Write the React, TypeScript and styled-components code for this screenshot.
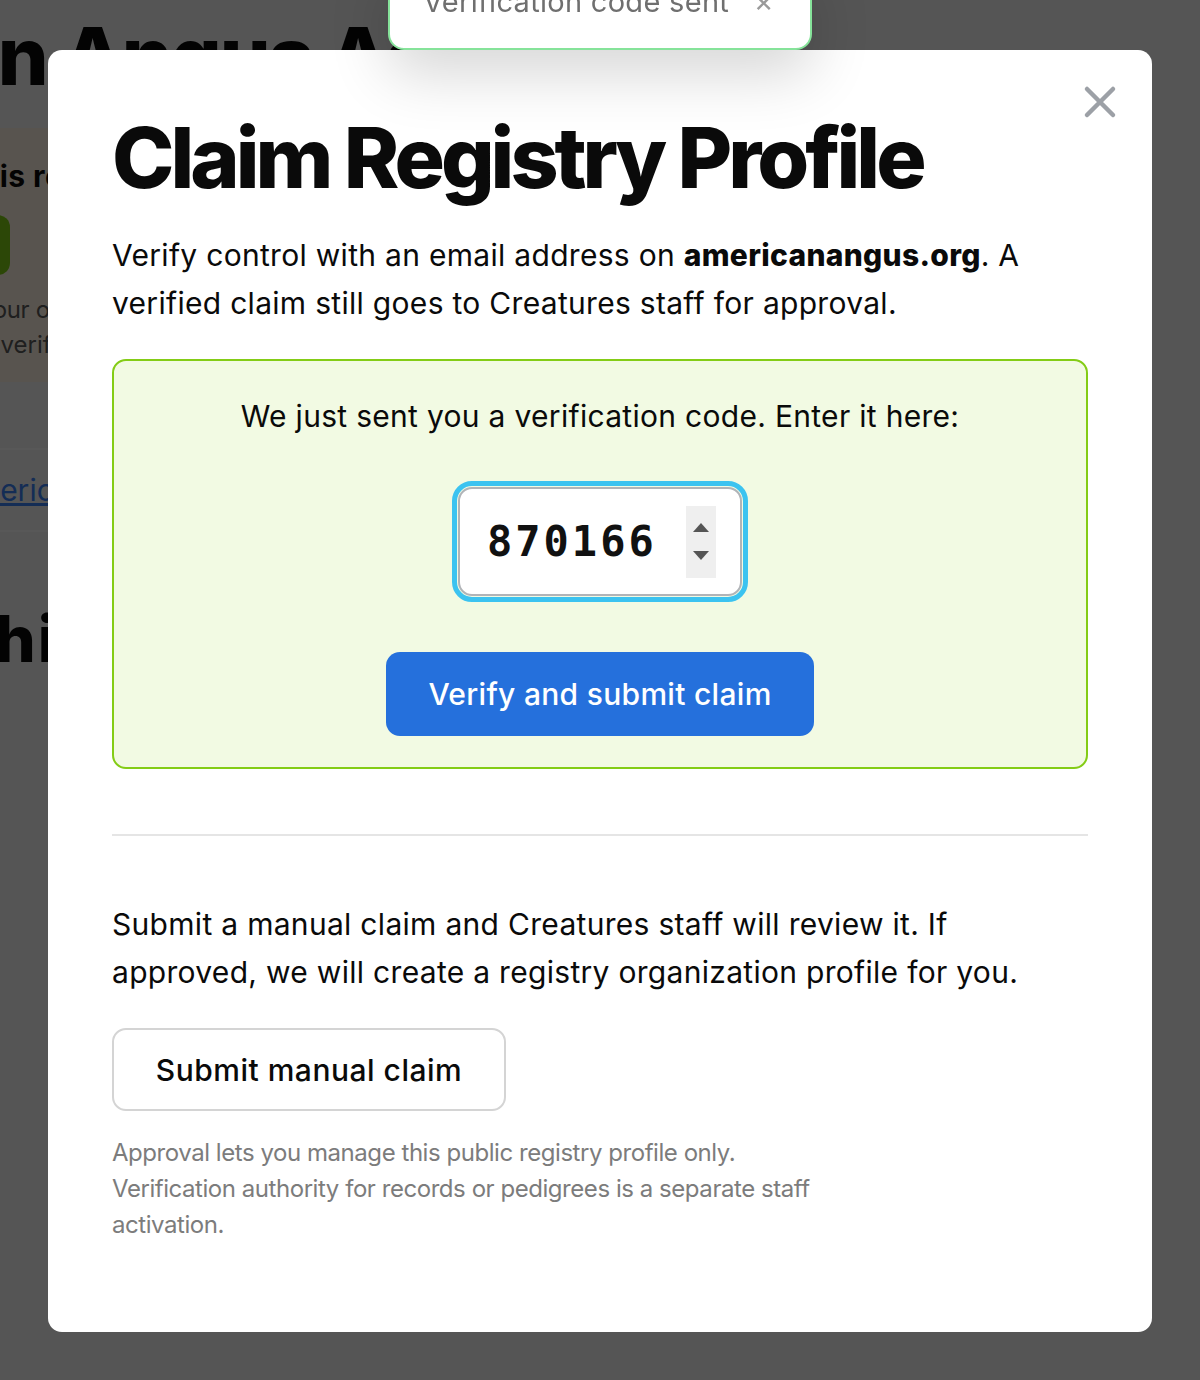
import React, { useState } from "react";
import styled, { createGlobalStyle } from "styled-components";

const GlobalStyle = createGlobalStyle`
  html, body {
    margin: 0;
    padding: 0;
    background: #f5f5f5;
    font-family: Inter, "Noto Sans", "Liberation Sans", sans-serif;
    color: #0a0a0a;
    overflow: hidden;
  }
  * { box-sizing: border-box; }
`;

// ---- page behind the dialog ----

const Page = styled.div`
  width: 1200px;
  height: 1380px;
  overflow: hidden;
`;

const PageColumn = styled.div`
  margin-left: -324px;
  padding-top: 16px;
  width: 1400px;
`;

const PageTitle = styled.h1`
  margin: 0;
  font-size: 80px;
  line-height: 80px;
  font-weight: 800;
  letter-spacing: -2px;
  white-space: nowrap;
`;

const Notice = styled.div`
  margin-top: 32px;
  height: 254px;
  background: #fff4e5;
  border-radius: 12px;
  padding: 30px 20px 0;
`;

const NoticeHead = styled.div`
  font-size: 30px;
  line-height: 36px;
  font-weight: 700;
  letter-spacing: 0.4px;
  white-space: nowrap;
`;

const NoticeButton = styled.div`
  margin-top: 21px;
  width: 314px;
  height: 60px;
  border-radius: 12px;
  background: #7fcf17;
`;

const NoticeText = styled.div`
  margin-top: 17px;
  font-size: 24px;
  line-height: 35px;
  color: #5a5a5a;
  white-space: nowrap;
`;

const NoticeLine = styled.div<{ $tracking: number }>`
  letter-spacing: ${(p) => p.$tracking}px;
`;

const LinkRow = styled.div`
  margin-top: 66px;
  height: 84px;
  border-top: 2px solid #ffffff;
  border-bottom: 2px solid #ffffff;
  display: grid;
  grid-template-columns: 281px 1fr;
  align-items: center;
  font-size: 30px;
  a {
    color: #3b82f6;
  }
`;

const RowLabel = styled.span`
  color: #555;
`;

const SectionTitle = styled.h2`
  margin: 69px 0 0;
  font-size: 64px;
  line-height: 76px;
  font-weight: 800;
  letter-spacing: 2px;
  white-space: nowrap;
`;

// ---- overlay, toast and dialog ----

const Overlay = styled.div`
  position: fixed;
  inset: 0;
  background: rgba(0, 0, 0, 0.653);
  padding: 50px 48px;
`;

const Toast = styled.div`
  position: fixed;
  top: -40px;
  left: 388px;
  width: 424px;
  height: 90px;
  background: #fff;
  border: 2px solid #86e39a;
  border-radius: 16px;
  box-shadow: 0 24px 60px rgba(0, 0, 0, 0.16);
  display: flex;
  align-items: center;
  justify-content: space-between;
  padding: 0 36px 8px 33px;
  color: #6f6f6f;
  font-size: 29px;
  letter-spacing: 0.3px;
  z-index: 2;
`;

const ToastClose = styled.span`
  font-size: 30px;
  color: #9a9a9a;
`;

const Dialog = styled.div`
  position: relative;
  background: #fff;
  border-radius: 14px;
  width: 1104px;
  height: 1282px;
  padding: 58px 64px 64px;
`;

const CloseButton = styled.button`
  position: absolute;
  top: 34px;
  right: 34px;
  width: 36px;
  height: 36px;
  border: 0;
  background: none;
  padding: 0;
  cursor: pointer;
  display: flex;
  align-items: center;
  justify-content: center;
`;

const Title = styled.h2`
  margin: 0;
  font-size: 84px;
  line-height: 100px;
  font-weight: 800;
  letter-spacing: -4px;
`;

const Lead = styled.p`
  margin: 23px 0 0;
  max-width: 940px;
  font-size: 30px;
  line-height: 48px;
  letter-spacing: 0.3px;
  b {
    font-weight: 800;
  }
`;

const CodePanel = styled.div`
  margin-top: 32px;
  border: 2px solid #84cc16;
  border-radius: 14px;
  background: #f2fae3;
  padding: 33px 0 31px;
  display: flex;
  flex-direction: column;
  align-items: center;
`;

const PanelText = styled.div`
  font-size: 30px;
  line-height: 44px;
  letter-spacing: 0.3px;
`;

const CodeField = styled.div`
  margin-top: 43px;
  width: 296px;
  height: 121px;
  border-radius: 20px;
  border: 5px solid #3cc3f0;
  padding: 1px;
`;

const CodeInner = styled.div`
  height: 100%;
  border: 2px solid #b1b4b8;
  border-radius: 14px;
  background: #fff;
  display: flex;
  align-items: center;
  padding-left: 27px;
  padding-right: 24px;
`;

const CodeValue = styled.span`
  flex: 1;
  font-family: "DejaVu Sans Mono", "Liberation Mono", monospace;
  font-weight: 700;
  font-size: 42px;
  letter-spacing: 3px;
  color: #111;
`;

const Spinner = styled.div`
  width: 30px;
  height: 72px;
  background: #efefef;
  display: flex;
  flex-direction: column;
  align-items: center;
  justify-content: space-evenly;
`;

const PrimaryButton = styled.button`
  margin-top: 50px;
  width: 428px;
  height: 84px;
  border: 0;
  border-radius: 14px;
  background: #2570dc;
  color: #fff;
  font-family: inherit;
  font-size: 30px;
  font-weight: 500;
  letter-spacing: 0.3px;
`;

const Divider = styled.hr`
  margin: 65px 0 0;
  border: 0;
  border-top: 2px solid #e5e5e5;
`;

const Body = styled.p`
  margin: 64px 0 0;
  max-width: 940px;
  font-size: 30px;
  line-height: 48px;
  letter-spacing: 0.3px;
`;

const OutlineButton = styled.button`
  margin-top: 32px;
  width: 394px;
  height: 83px;
  border: 2px solid #d4d4d4;
  border-radius: 14px;
  background: #fff;
  color: #0a0a0a;
  font-family: inherit;
  font-size: 30px;
  font-weight: 500;
  letter-spacing: 0.5px;
`;

const FinePrint = styled.p`
  margin: 24px 0 0;
  max-width: 720px;
  font-size: 24px;
  line-height: 36px;
  color: #7c7c7c;
  letter-spacing: -0.45px;
`;

const Caret = ({ up }: { up?: boolean }) => (
  <svg width="18" height="11" viewBox="0 0 18 11">
    <path d={up ? "M9 1 L17 10 L1 10 Z" : "M1 1 L17 1 L9 10 Z"} fill="#555" />
  </svg>
);

export default function App() {
  const [code] = useState("870166");
  return (
    <>
      <GlobalStyle />
      <Page>
        <PageColumn>
          <PageTitle>American Angus Association</PageTitle>
          <Notice>
            <NoticeHead>This registry profile is ready to be claimed</NoticeHead>
            <NoticeButton />
            <NoticeText>
              <NoticeLine $tracking={-0.35}>
                Are you on staff? If this is your organization, claim it here.
              </NoticeLine>
              <NoticeLine $tracking={0}>
                Claim it and our staff must verify it before anything changes.
              </NoticeLine>
            </NoticeText>
          </Notice>
          <LinkRow>
            <RowLabel>Website</RowLabel>
            <a href="#">americanangus.org</a>
          </LinkRow>
          <SectionTitle>Herds within this registry</SectionTitle>
        </PageColumn>
      </Page>

      <Toast>
        <span>Verification code sent</span>
        <ToastClose>×</ToastClose>
      </Toast>

      <Overlay>
        <Dialog>
          <CloseButton aria-label="Close">
            <svg width="34" height="34" viewBox="0 0 34 34">
              <path
                d="M4 4 L30 30 M30 4 L4 30"
                stroke="#9ca0a6"
                strokeWidth="4.5"
                strokeLinecap="round"
              />
            </svg>
          </CloseButton>
          <Title>Claim Registry Profile</Title>
          <Lead>
            Verify control with an email address on <b>americanangus.org</b>. A
            verified claim still goes to Creatures staff for approval.
          </Lead>
          <CodePanel>
            <PanelText>We just sent you a verification code. Enter it here:</PanelText>
            <CodeField>
              <CodeInner>
                <CodeValue>{code}</CodeValue>
                <Spinner>
                  <Caret up />
                  <Caret />
                </Spinner>
              </CodeInner>
            </CodeField>
            <PrimaryButton>Verify and submit claim</PrimaryButton>
          </CodePanel>
          <Divider />
          <Body>
            Submit a manual claim and Creatures staff will review it. If
            approved, we will create a registry organization profile for you.
          </Body>
          <OutlineButton>Submit manual claim</OutlineButton>
          <FinePrint>
            Approval lets you manage this public registry profile only.
            Verification authority for records or pedigrees is a separate staff
            activation.
          </FinePrint>
        </Dialog>
      </Overlay>
    </>
  );
}
